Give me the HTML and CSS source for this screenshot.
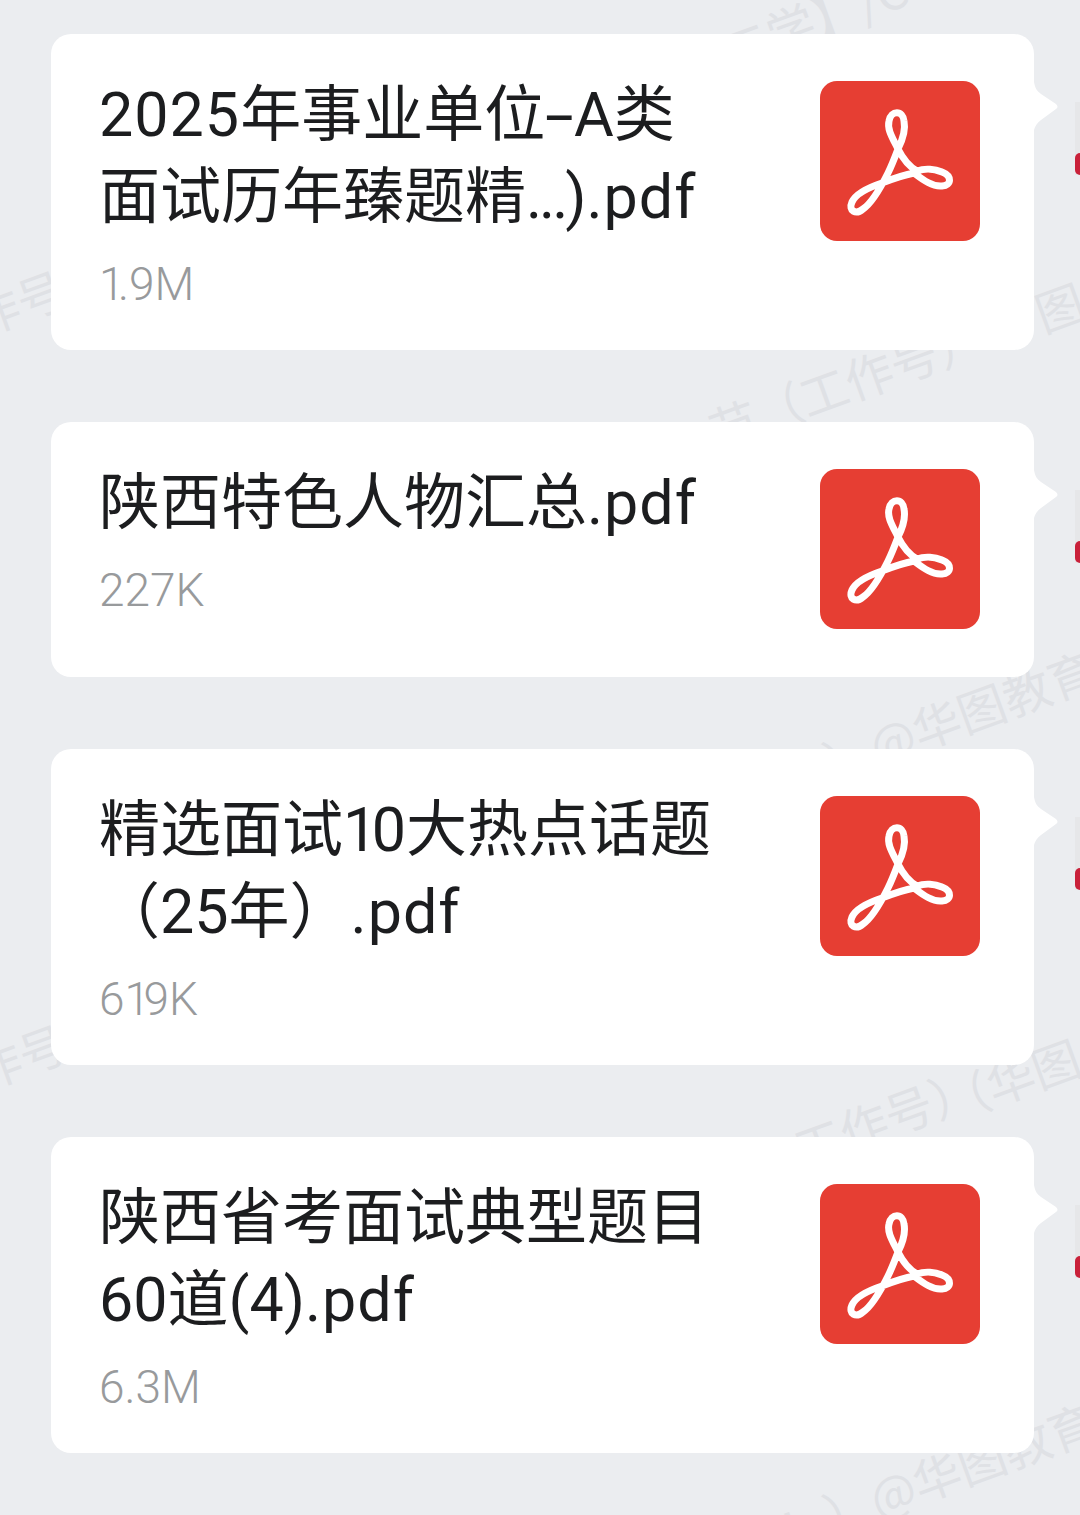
FILE: index.html
```html
<!DOCTYPE html>
<html lang="zh-CN">
<head>
  <meta charset="UTF-8">
  <meta name="viewport" content="width=device-width, initial-scale=1">
  <title>文件消息</title>
  <link rel="stylesheet" href="styles.css">
</head>
<body>
  <svg class="icon-defs" width="0" height="0" aria-hidden="true">
    <symbol id="pdf-icon" viewBox="0 0 160 160">
      <rect width="160" height="160" rx="17" fill="#e63e33"/>
      <path d="M78 68C72 56 67 48 69 40C71 29 83 29 84 40C86 50 82 60 78 68C83 78 90 86 97 90C105 87 115 88 122 91C132 95 132 104 122 105C112 106 102 98 94 92C84 94 72 98 62 102C50 106 36 112 32 121C28 130 36 134 43 128C52 122 62 104 68 92C72 84 75 76 78 68Z" fill="none" stroke="#fff" stroke-width="7" stroke-linejoin="round"/>
    </symbol>
  </svg>

  <!-- watermark sits under the cards -->
  <div class="mark mark-top">二学】/C</div>
  <div class="mark mark-work">节（工作号）</div>
  <div class="mark mark-edu1">）@华图教育</div>
  <div class="mark mark-work2">工作号）</div>
  <div class="mark mark-hua">（华图</div>
  <div class="mark mark-edu2">学！）@华图教育</div>
  <div class="mark mark-left1">作号</div>
  <div class="mark mark-left2">作号</div>
  <div class="mark mark-right1">图</div>

  <main class="chat">
    <div class="msg">
      <div class="msg-text">
        <div class="file-name"><span class="wide">2025</span>年事业单位<span class="dash">-</span>A类<br>面试历年臻题精<span class="dots">...</span>)<span class="ext">.pdf</span></div>
        <div class="file-size"><span class="one">1</span>.9M</div>
      </div>
      <svg class="file-icon"><use href="#pdf-icon"/></svg>
      <span class="avatar"></span>
    </div>

    <div class="msg">
      <div class="msg-text">
        <div class="file-name">陕西特色人物汇总<span class="ext">.pdf</span></div>
        <div class="file-size">227K</div>
      </div>
      <svg class="file-icon"><use href="#pdf-icon"/></svg>
      <span class="avatar"></span>
    </div>

    <div class="msg">
      <div class="msg-text">
        <div class="file-name">精选面试<span class="one">1</span>0大热点话题<br>（25年）<span class="ext">.pdf</span></div>
        <div class="file-size">6<span class="one">1</span>9K</div>
      </div>
      <svg class="file-icon"><use href="#pdf-icon"/></svg>
      <span class="avatar"></span>
    </div>

    <div class="msg">
      <div class="msg-text">
        <div class="file-name">陕西省考面试典型题目<br>60道(4)<span class="ext">.pdf</span></div>
        <div class="file-size">6.3M</div>
      </div>
      <svg class="file-icon"><use href="#pdf-icon"/></svg>
      <span class="avatar"></span>
    </div>
  </main>
</body>
</html>
```

FILE: styles.css
```css
html, body {
  margin: 0;
  padding: 0;
}

body {
  position: relative;
  height: 1515px;
  overflow: hidden;
  background-color: #ebedf0;
  font-family: "Noto Sans CJK SC", "Noto Sans", sans-serif;
}

.icon-defs {
  position: absolute;
}

.chat {
  position: relative;
  display: flex;
  flex-direction: column;
  gap: 72px;
  padding: 34px 46px 0 51px;
}

.msg {
  position: relative;
  display: flex;
  justify-content: space-between;
  align-items: flex-start;
  padding: 40px 54px 36px 48px;
  background-color: #fff;
  border-radius: 20px;
}

/* bubble tail */
.msg::after {
  content: "";
  position: absolute;
  top: 48px;
  right: -25px;
  width: 25px;
  height: 48px;
  background-color: #fff;
  clip-path: path("M0 0C1 6 3 9 7 12L22 22Q25 25 22 27L7 38C3 41 1 44 0 48Z");
}

.file-name {
  font-family: Roboto, "Noto Sans CJK SC", sans-serif;
  font-size: 61px;
  line-height: 82px;
  color: #1c1d1f;
  white-space: nowrap;
}

.wide {
  letter-spacing: 1px;
}

.ext {
  letter-spacing: 1px;
}

.dots {
  letter-spacing: -3px;
}

.dash {
  display: inline-block;
  margin: 0 6px;
  transform: scaleX(1.7);
}

/* the 1 is narrower than the other digits in this font */
.one {
  letter-spacing: -0.14em;
}

.file-name .one {
  letter-spacing: -0.09em;
}

.file-size {
  margin-top: 16px;
  font-family: Roboto, "Noto Sans CJK SC", sans-serif;
  font-size: 46px;
  font-weight: 300;
  line-height: 60px;
  color: #989a9c;
}

.file-icon {
  flex: none;
  width: 160px;
  height: 160px;
  margin: 7px 0 12px;
}

/* edge of the sender's avatar, cut off by the window */
.avatar {
  position: absolute;
  top: 68px;
  right: -46px;
  width: 5px;
  height: 73px;
  background-color: #e6e7e9;
}

.avatar::after {
  content: "";
  position: absolute;
  bottom: 0;
  left: 0;
  width: 5px;
  height: 22px;
  background-color: #c9213a;
  border-radius: 5px 0 0 5px;
}

.mark {
  position: absolute;
  font-size: 48px;
  line-height: 1;
  color: #dfe1e5;
  white-space: nowrap;
  transform: rotate(-20deg);
  transform-origin: left top;
}

.mark-top { left: 714px; top: 28px; }
.mark-work { left: 702px; top: 408px; }
.mark-edu1 { left: 817px; top: 740px; }
.mark-work2 { left: 787px; top: 1126px; }
.mark-hua { left: 934px; top: 1080px; }
.mark-edu2 { left: 727px; top: 1525px; }
.mark-left1 { left: -36px; top: 295px; }
.mark-left2 { left: -34px; top: 1049px; }
.mark-right1 { left: 1028px; top: 291px; }
```
